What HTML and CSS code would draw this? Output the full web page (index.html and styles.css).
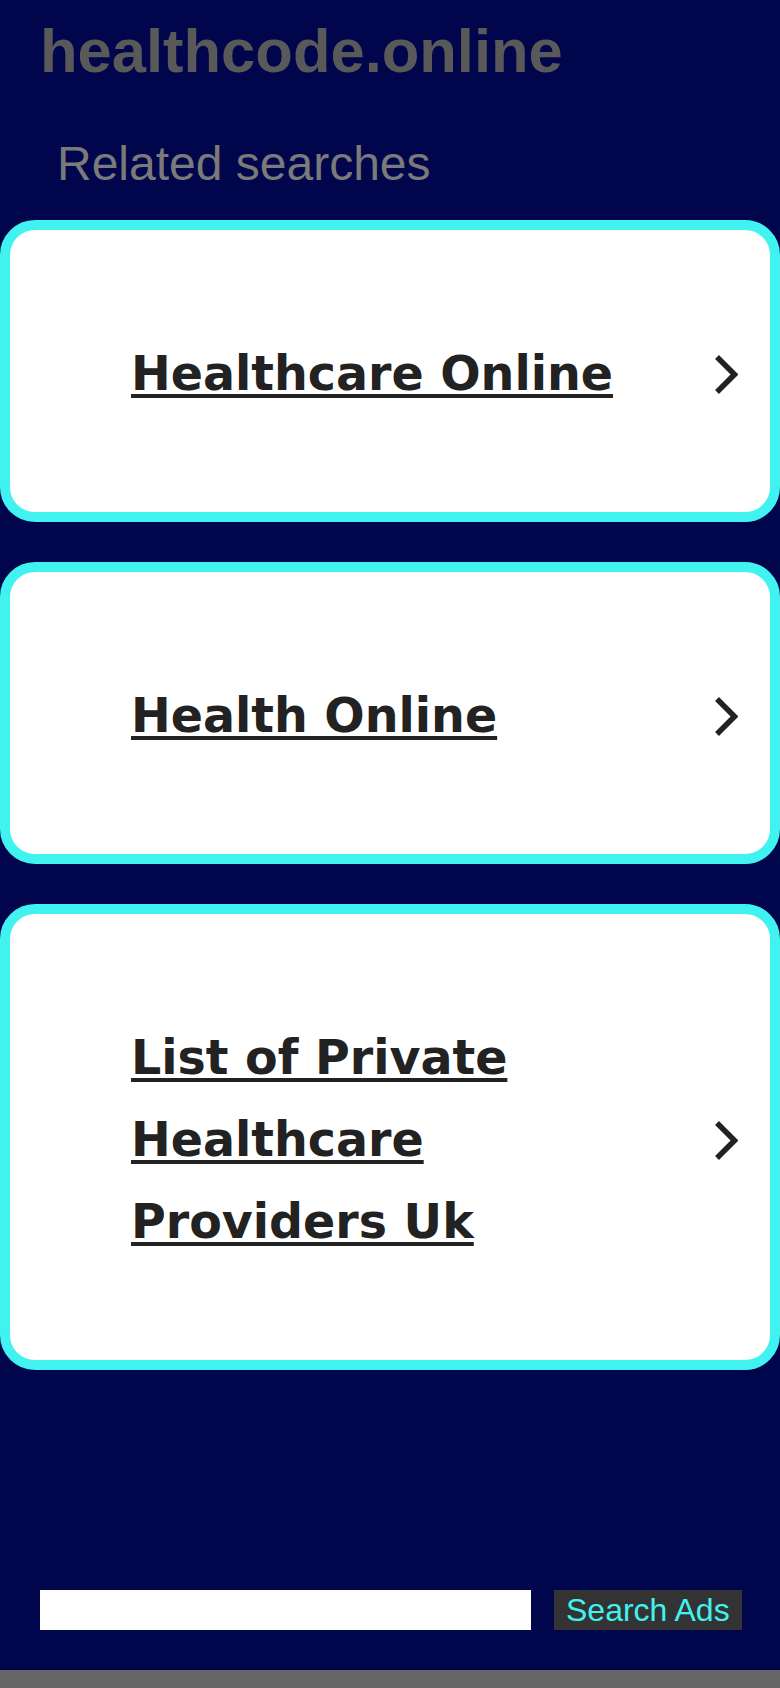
FILE: index.html
```html
<!DOCTYPE html>
<html lang="en">
<head>
<meta charset="utf-8">
<title>healthcode.online</title>
<link rel="stylesheet" href="styles.css">
</head>
<body>
<div class="page">
  <h1 class="site-title">healthcode.online</h1>
  <h2 class="related">Related searches</h2>
  <div class="cards">
    <a class="card" href="#">
      <span class="card-text">Healthcare Online</span>
      <svg class="chev" viewBox="0 0 24 39" width="24" height="39"><path d="M3 2 L20.5 19.5 L3 37" fill="none" stroke="#222" stroke-width="5.5"/></svg>
    </a>
    <a class="card" href="#">
      <span class="card-text">Health Online</span>
      <svg class="chev" viewBox="0 0 24 39" width="24" height="39"><path d="M3 2 L20.5 19.5 L3 37" fill="none" stroke="#222" stroke-width="5.5"/></svg>
    </a>
    <a class="card" href="#">
      <span class="card-text">List of Private Healthcare Providers Uk</span>
      <svg class="chev" viewBox="0 0 24 39" width="24" height="39"><path d="M3 2 L20.5 19.5 L3 37" fill="none" stroke="#222" stroke-width="5.5"/></svg>
    </a>
  </div>
  <form class="search">
    <input class="search-input" type="text" aria-label="Search">
    <button class="search-btn" type="button">Search Ads</button>
  </form>
  <div class="footer-bar"></div>
</div>
</body>
</html>
```
FILE: styles.css
```css
html, body {
  margin: 0;
  padding: 0;
  background: #01054b;
}
.page {
  height: 1688px;
  overflow: hidden;
  display: flex;
  flex-direction: column;
}
.site-title {
  margin: 20px 0 0 40px;
  font-family: "Liberation Sans", Arial, sans-serif;
  font-weight: bold;
  font-size: 61.5px;
  line-height: 61px;
  color: #595959;
}
.related {
  margin: 59px 0 0 57px;
  font-family: "Liberation Sans", Arial, sans-serif;
  font-weight: normal;
  font-size: 48px;
  line-height: 47px;
  color: #7a7a7a;
}
.cards {
  margin-top: 33px;
  display: flex;
  flex-direction: column;
  gap: 40px;
}
.card {
  display: flex;
  align-items: center;
  background: #fff;
  border: 10px solid #40f2f0;
  border-radius: 35px;
  padding: 103px 32px 97px 121px;
  text-decoration: none;
}
.card-text {
  flex: 1;
  margin-right: 60px;
  font-family: "DejaVu Sans", Verdana, sans-serif;
  font-weight: bold;
  font-size: 47.5px;
  line-height: 82px;
  color: #222;
  text-decoration: underline;
  text-decoration-thickness: 4px;
  text-underline-offset: 4px;
}
.chev {
  flex: none;
  display: block;
}
.search {
  margin: 220px 0 0 40px;
  display: flex;
  gap: 23px;
  height: 40px;
}
.search-input {
  width: 491px;
  height: 40px;
  box-sizing: border-box;
  border: none;
  background: #fff;
  padding: 0;
  margin: 0;
}
.search-btn {
  width: 188px;
  height: 40px;
  border: none;
  margin: 0;
  padding: 0 0 0 12px;
  text-align: left;
  background: #333;
  color: #40f2f0;
  font-family: "Liberation Sans", Arial, sans-serif;
  font-size: 32px;
  line-height: 40px;
}
.footer-bar {
  margin-top: 40px;
  height: 18px;
  background: #666;
}
```
